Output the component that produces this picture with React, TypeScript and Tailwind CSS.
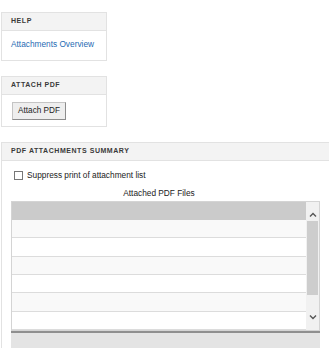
import React from "react";

const rows = [0, 1, 2, 3, 4, 5];

const Panel = ({ title, children, wide }: { title: string; children: React.ReactNode; wide?: boolean }) => (
  <div className={wide ? "w-[345px] border-l border-t border-[#e2e2e2]" : "w-[106px] border border-[#e2e2e2]"}>
    <div className="h-[18px] bg-[#f3f3f3] border-b border-[#e2e2e2] px-[9px] flex items-center text-[7px] font-bold tracking-[0.55px] text-[#3a3a3a]">
      {title}
    </div>
    {children}
  </div>
);

const Chevron = ({ down }: { down?: boolean }) => (
  <svg width="8" height="6" viewBox="0 0 8 6" className="mx-auto">
    <path d={down ? "M1 1.5 L4 4.5 L7 1.5" : "M1 4.5 L4 1.5 L7 4.5"} fill="none" stroke="#555" strokeWidth="1.4" />
  </svg>
);

export default function App() {
  return (
    <div className="w-[329px] h-[349px] overflow-hidden bg-white font-['Liberation_Sans',Arial,sans-serif] text-[#222]">
      <div className="flex flex-col gap-[15px] pt-[12px] pl-[1px]">
        <Panel title="HELP">
          <div className="px-[9px] pt-[8px] pb-[11px] text-[8.3px] leading-[10px]">
            <a className="text-[#1f6cb3]">Attachments Overview</a>
          </div>
        </Panel>

        <Panel title="ATTACH PDF">
          <div className="flex px-[10px] pt-[7px] pb-[6px]">
            <button className="h-[18px] w-[54px] bg-[#eeeeee] border border-[#c4c4c4] border-b-[#8c8c8c] border-r-[#8c8c8c] text-[8.2px] leading-[10px] text-[#222]">
              Attach PDF
            </button>
          </div>
        </Panel>

        <Panel title="PDF ATTACHMENTS SUMMARY" wide>
          <div className="pl-[9px] pt-[9px] w-[318px]">
            <label className="flex items-center gap-[4px] pl-[3px] text-[8.3px] leading-[10px]">
              <span className="w-[9px] h-[9px] border border-[#777] bg-white" />
              Suppress print of attachment list
            </label>
            <div className="text-center text-[8.3px] leading-[10px] pt-[8px] pb-[3px] pr-[13px]">Attached PDF Files</div>
            <div className="flex border border-[#d4d4d4] h-[130px]">
              <div className="flex-1 flex flex-col">
                <div className="h-[18px] bg-[#cbcbcb]" />
                {rows.map((r) => (
                  <div
                    key={r}
                    className={`h-[18.5px] border-b border-[#dcdcdc] ${r % 2 === 0 ? "bg-[#f9f9f9]" : "bg-white"}`}
                  />
                ))}
              </div>
              <div className="w-[13px] bg-[#f1f1f1] flex flex-col pt-[10px] pb-[10px]">
                <Chevron />
                <div className="mx-[1px] mt-[3px] h-[74px] bg-[#cdcdcd]" />
                <div className="flex-1" />
                <Chevron down />
              </div>
            </div>
            <div className="h-[2px] bg-[#8f8f8f]" />
            <div className="h-[15px] bg-[#e4e4e4]" />
          </div>
        </Panel>
      </div>
    </div>
  );
}
